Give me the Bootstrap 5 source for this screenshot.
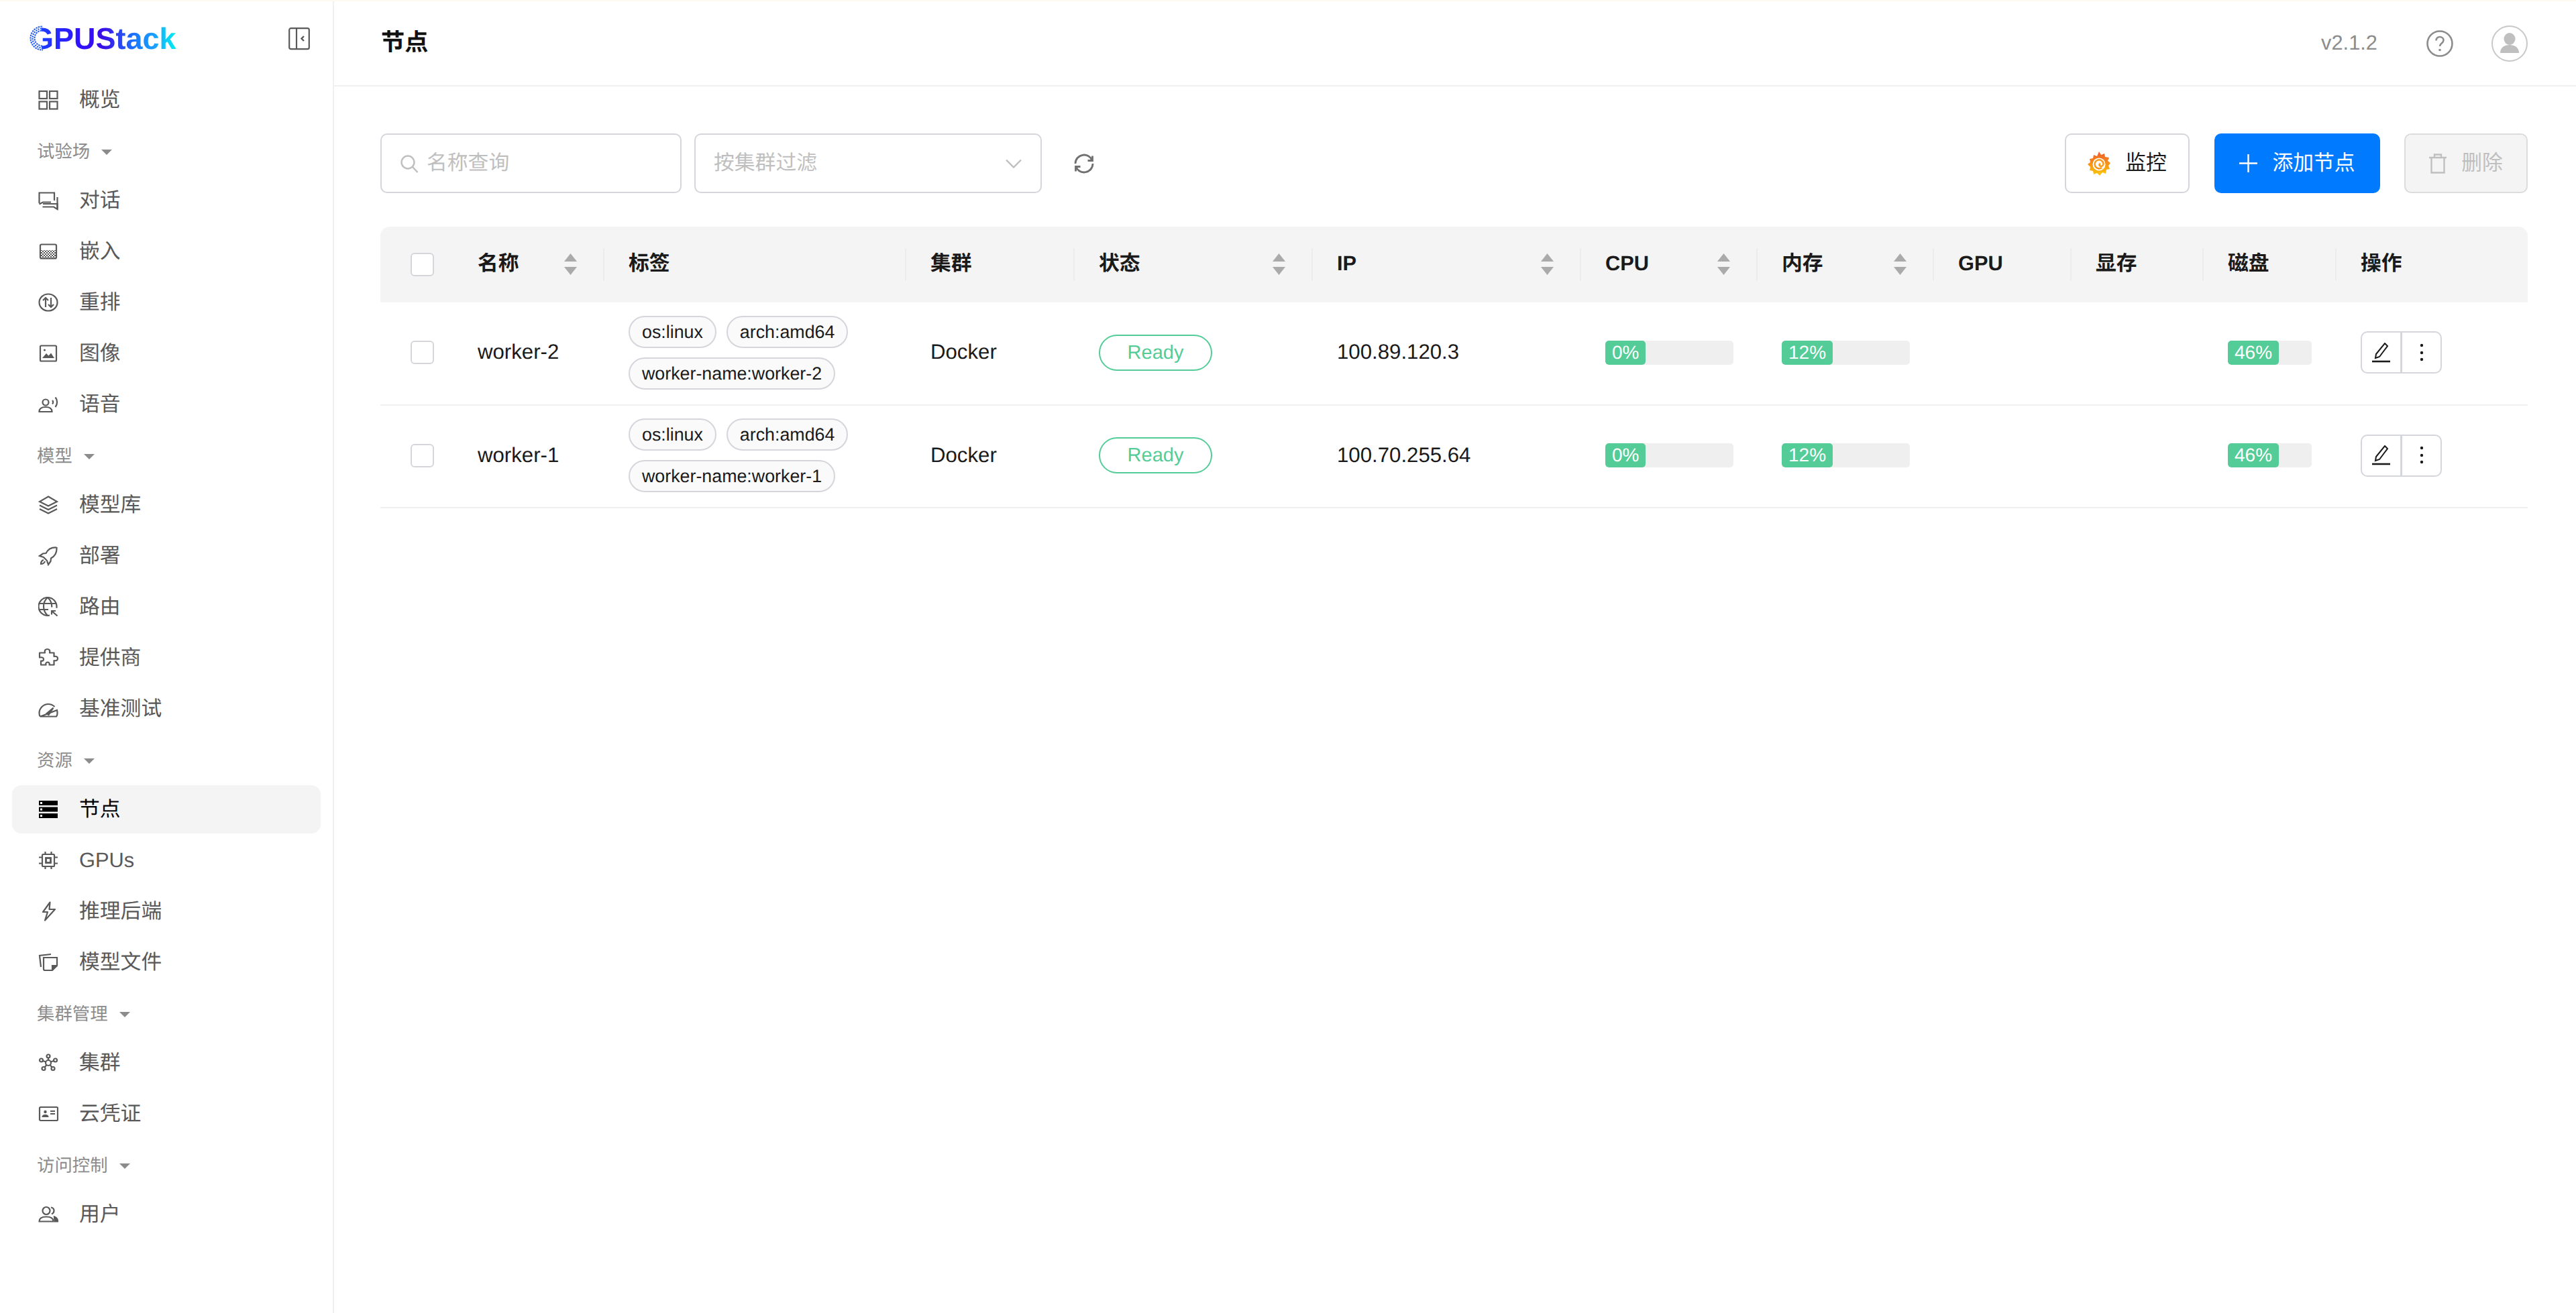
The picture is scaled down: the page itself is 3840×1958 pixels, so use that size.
<!DOCTYPE html>
<html lang="zh-CN">

<head>
    <meta charset="UTF-8">
    <title>GPUStack - 节点</title>
    <link href="https://cdn.jsdelivr.net/npm/bootstrap@5.3.0/dist/css/bootstrap.min.css" rel="stylesheet">
    <style>
        body {
            font-family: "Liberation Sans", "Noto Sans CJK SC", sans-serif;
            font-size: 30.8px;
            color: #1a1a1a;
            background: #fff;
            text-rendering: geometricPrecision;
        }

        .page-wrap {
            min-height: 1956px;
        }

        .top-strip {
            height: 2px;
            background: #fff9f1;
        }

        /* sidebar */
        .side-bar {
            width: 498px;
            flex: 0 0 498px;
            border-right: 2px solid #f0f0f0;
        }

        .side-logo {
            height: 111px;
            padding: 0 34px 0 45px;
        }

        .logo-text {
            position: relative;
            font-size: 45px;
            line-height: 1;
            font-weight: 700;
            background: linear-gradient(90deg, #1a4cff 0%, #2a20ff 25%, #3010ff 35%, #3a10e6 50%, #1a78ff 72%, #1aa0ff 85%, #00f0f0 100%);
            -webkit-background-clip: text;
            background-clip: text;
            color: transparent;
        }

        .logo-dots {
            position: absolute;
            left: -1px;
            top: 3px;
            width: 20px;
            height: 38px;
        }

        .side-item {
            height: 72px;
            margin: 0 18px 4px;
            padding: 0 0 0 39px;
            gap: 31px;
            color: #595959;
            border-radius: 14px;
            font-size: 30.8px;
        }

        .side-item:hover {
            color: #595959;
        }

        .side-item.active-item,
        .side-item.active-item:hover {
            background: #f4f4f4;
            color: #000;
        }

        .side-item svg {
            width: 30px;
            height: 30px;
            flex: none;
            fill: none;
            stroke: currentColor;
            stroke-width: 2.2;
        }

        .side-label {
            height: 74px;
            padding-left: 55px;
            padding-top: 2px;
            gap: 17px;
            color: #8c8c8c;
            font-size: 26.4px;
        }

        .side-caret {
            width: 0;
            height: 0;
            border-left: 8px solid transparent;
            border-right: 8px solid transparent;
            border-top: 8px solid #8c8c8c;
        }

        /* top bar */
        .top-bar {
            height: 127px;
            border-bottom: 2px solid #f0f0f0;
            padding: 0 72px 0 70px;
        }

        .top-title {
            font-size: 35.2px;
            font-weight: 700;
            color: #111;
        }

        .version-text {
            color: #8c8c8c;
            font-size: 30.8px;
            margin-right: 73px;
        }

        .help-icon {
            width: 40px;
            height: 40px;
            margin-right: 57px;
        }

        .user-icon {
            width: 54px;
            height: 54px;
        }

        /* toolbar */
        .main-body {
            padding: 70px 72px 0 69px;
        }

        .tool-row {
            height: 89px;
            margin-bottom: 50px;
        }

        .tool-input {
            height: 89px;
            border: 2px solid #d5d5dc;
            border-radius: 10px;
            color: #bfbfbf;
            background: #fff;
            padding: 0 27px;
        }

        .search-box {
            width: 449px;
            margin-right: 19px;
            gap: 12px;
        }

        .filter-box {
            width: 518px;
            padding-right: 28px;
            margin-right: 47px;
        }

        .refresh-icon {
            width: 32px;
            height: 32px;
        }

        .tool-btn {
            height: 89px;
            border-width: 2px;
            border-radius: 10px;
            font-size: 30.8px;
            padding: 0;
            gap: 22px;
        }

        .btn-monitor {
            width: 186px;
            background: #fff;
            border-color: #d5d5dc;
            color: #1a1a1a;
            margin-right: 37px;
        }

        .btn-add {
            width: 247px;
            background: #007bff;
            border-color: #007bff;
            color: #fff;
            margin-right: 36px;
        }

        .btn-del,
        .btn-del:disabled {
            width: 184px;
            background: #f4f4f4;
            border-color: #dcdcdc;
            color: #bfbfbf;
            opacity: 1;
        }

        /* table */
        .node-table {
            table-layout: fixed;
            width: 3201px;
            margin: 0;
            --bs-table-bg: transparent;
            --bs-table-border-color: #f0f0f0;
            color: #1a1a1a;
        }

        .node-table th {
            height: 113px;
            background: #f4f4f4;
            border: 0;
            padding: 0 39px 2px 38px;
            vertical-align: middle;
            font-weight: 700;
            position: relative;
        }

        .node-table th:first-child {
            padding: 0 0 0 45px;
            border-top-left-radius: 14px;
        }

        .node-table th:last-child {
            border-top-right-radius: 14px;
        }

        .node-table th+th+th::before {
            content: "";
            position: absolute;
            left: 0;
            top: 32px;
            height: 49px;
            width: 2px;
            background: #ececec;
        }

        .node-table td {
            height: 153px;
            padding: 0 0 3px 38px;
            vertical-align: middle;
            border-bottom: 2px solid #f0f0f0;
            font-size: 31.2px;
        }

        .node-table td:first-child {
            padding: 0 0 3px 45px;
        }

        .sort-icon {
            width: 19px;
            height: 32px;
            flex: none;
            fill: #aaa;
        }

        .col-check { width: 107px; }
        .col-name { width: 225px; }
        .col-tags { width: 450px; }
        .col-cluster { width: 251px; }
        .col-state { width: 355px; }
        .col-ip { width: 400px; }
        .col-cpu { width: 263px; }
        .col-mem { width: 263px; }
        .col-gpu { width: 205px; }
        .col-vram { width: 197px; }
        .col-disk { width: 198px; }
        .col-act { width: 287px; }

        .row-check.form-check-input {
            width: 35px;
            height: 35px;
            margin: 0;
            border: 2px solid #d5d5dc;
            border-radius: 6px;
            display: block;
        }

        .tag-list {
            gap: 14px 15px;
        }

        .tag-pill {
            height: 48px;
            line-height: 44px;
            padding: 0 18px;
            border: 2px solid #d5d5dc;
            border-radius: 24px;
            background: #fafafa;
            font-size: 26.8px;
            color: #1a1a1a;
            white-space: nowrap;
        }

        .state-pill {
            width: 169px;
            height: 54px;
            line-height: 50px;
            text-align: center;
            border: 2px solid #54cc98;
            border-radius: 27px;
            color: #54cc98;
            font-size: 29px;
            background: #fff;
        }

        .usage-bar.progress {
            height: 36px;
            border-radius: 5px;
            background: #efefef;
            width: 191px;
            font-size: 28px;
        }

        .usage-bar.disk-bar {
            width: 125px;
        }

        .usage-bar .progress-bar {
            background: #54cc98;
            color: #fff;
            min-width: fit-content;
            padding: 0 10px;
            border-radius: 5px;
            overflow: visible;
        }

        .act-group .btn {
            width: 61px;
            height: 63px;
            padding: 0;
            background: #fff;
            border: 2px solid #d5d5dc;
            border-radius: 10px;
        }

        .act-group .btn svg {
            width: 30px;
            height: 30px;
        }
    </style>
</head>

<body>
    <div class="top-strip"></div>
    <div class="d-flex page-wrap">
        <!-- sidebar -->
        <aside class="side-bar">
            <div class="side-logo d-flex align-items-center justify-content-between">
                <span class="logo-text">GPUStack
                    <svg class="logo-dots" viewBox="0 0 20 38">
                        <rect width="18" height="38" fill="#fff"/>
                        <g fill="none" stroke="#1c57f2">
                            <circle cx="19" cy="19" r="17.500" stroke-width="2" stroke-dasharray="2.400 1.200"/>
                            <circle cx="19" cy="19" r="14.500" stroke-width="2.200" stroke-dasharray="2 1.600"/>
                            <circle cx="19" cy="19" r="11.500" stroke-width="2" stroke-dasharray="2.400 1.200"/>
                        </g>
                    </svg>
                </span>
                <svg width="32" height="34" viewBox="0 0 32 34" fill="none" stroke="#595959" stroke-width="2.2">
                    <rect x="1.2" y="1.2" width="29.6" height="31" rx="2.5"/>
                    <path d="M12 1.2v31"/>
                    <path d="M23 13l-3.5 3.5L23 20" stroke-width="2.4"/>
                </svg>
            </div>

            <nav class="nav flex-column">
                <a class="nav-link side-item d-flex align-items-center" href="#">
                    <svg viewBox="0 0 30 30"><rect x="1.5" y="2" width="11.5" height="11"/><rect x="17" y="2" width="11.5" height="11"/><rect x="1.5" y="17.5" width="11.5" height="11"/><rect x="17" y="17.5" width="11.5" height="11"/></svg>
                    <span>概览</span>
                </a>
                <div class="side-label d-flex align-items-center"><span>试验场</span><i class="side-caret"></i></div>
                <a class="nav-link side-item d-flex align-items-center" href="#">
                    <svg viewBox="0 0 30 30"><path d="M1.5 19V3.5H24V15"/><path d="M1.5 20.5L7 17.5H19"/><path d="M7 20H28.5V28L23 24.5H6.5"/><path d="M28.5 10V28"/></svg>
                    <span>对话</span>
                </a>
                <a class="nav-link side-item d-flex align-items-center" href="#">
                    <svg viewBox="0 0 30 30"><defs><pattern id="chk" width="4" height="4" patternUnits="userSpaceOnUse"><rect width="2" height="2" fill="#595959" stroke="none"/><rect x="2" y="2" width="2" height="2" fill="#595959" stroke="none"/></pattern></defs><rect x="3" y="4.5" width="24" height="21" rx="2"/><rect x="3" y="13" width="24" height="12" fill="url(#chk)" stroke="none"/></svg>
                    <span>嵌入</span>
                </a>
                <a class="nav-link side-item d-flex align-items-center" href="#">
                    <svg viewBox="0 0 30 30"><ellipse cx="15" cy="15" rx="13.5" ry="12.5"/><path d="M11 22V9M7 12l4-4 4 4M19 8v13M15 18l4 4 4-4"/></svg>
                    <span>重排</span>
                </a>
                <a class="nav-link side-item d-flex align-items-center" href="#">
                    <svg viewBox="0 0 30 30"><rect x="3" y="3.5" width="24" height="23" rx="1.5"/><circle cx="9.5" cy="10" r="1.6" fill="currentColor" stroke="none"/><path d="M6 22l6-7 3.5 3.5 3.5-4 5 7.5z" fill="currentColor" stroke="none"/></svg>
                    <span>图像</span>
                </a>
                <a class="nav-link side-item d-flex align-items-center" href="#">
                    <svg viewBox="0 0 30 30"><circle cx="11" cy="12" r="4.5"/><path d="M1.5 26c0-5 4-7 9.5-7s9.5 2 9.5 7z"/><path d="M21 9c1.500 1.500 1.500 4 0 5.500M25.500 4.500c3.500 4 3.500 10 0 14.500"/></svg>
                    <span>语音</span>
                </a>
                <div class="side-label d-flex align-items-center"><span>模型</span><i class="side-caret"></i></div>
                <a class="nav-link side-item d-flex align-items-center" href="#">
                    <svg viewBox="0 0 30 30"><path d="M15 2.500L28 10l-13 6.500L2 10z"/><path d="M2 15.500l13 6.500 13-6.500"/><path d="M2 21l13 6.500L28 21"/></svg>
                    <span>模型库</span>
                </a>
                <a class="nav-link side-item d-flex align-items-center" href="#">
                    <svg viewBox="0 0 30 30"><path d="M27.500 2.500c-7-.5-13 2.500-16 8.500L7 11.500 2 15l6 2 5 5 2 6 3.500-5 .5-4.500c6-3 9-9 8.500-16.500z"/><path d="M8 21c-3 1-4 4-4 6 2 0 5-1 6-4"/></svg>
                    <span>部署</span>
                </a>
                <a class="nav-link side-item d-flex align-items-center" href="#">
                    <svg viewBox="0 0 30 30"><path d="M17 27.500c-1 .3-2 .5-3 .5A13.500 13.500 0 1 1 27.500 14.500c0 .8 0 1.500-.2 2.200"/><path d="M14 1c-8 7-8 19 0 27M14 1c4.500 4 6.500 9 6.300 14.500M1.500 10h25M1.500 19H15"/><path d="M28.500 28.500L20 21M20 26.500V21h6"/></svg>
                    <span>路由</span>
                </a>
                <a class="nav-link side-item d-flex align-items-center" href="#">
                    <svg viewBox="0 0 30 30"><path d="M10 7.500c-1-4 1-5.500 3.500-5.500s4.500 1.500 3.500 5.500h6.500v5.500c4-1 5.500 1 5.500 3s-1.500 4-5.500 3v6.500h-7c.8-3-1-4-2.500-4s-3.300 1-2.500 4H4v-6c3 .8 4-1 4-2.500S7 13.500 2 14.500V7.500z" stroke-linejoin="round"/></svg>
                    <span>提供商</span>
                </a>
                <a class="nav-link side-item d-flex align-items-center" href="#">
                    <svg viewBox="0 0 30 30"><path d="M3 26.500c-1-1-1.500-3-1.500-5 0-7.500 6-13.500 13.500-13.500 4 0 7 1.500 9.500 4M28 17c.5 1.500.5 3 .5 4.500 0 2-.5 4-1.500 5H3z"/><path d="M12.500 22l10-8.500-7 10.500z" fill="currentColor"/></svg>
                    <span>基准测试</span>
                </a>
                <div class="side-label d-flex align-items-center"><span>资源</span><i class="side-caret"></i></div>
                <a class="nav-link side-item active-item d-flex align-items-center" href="#">
                    <svg viewBox="0 0 30 30"><rect x="1" y="2" width="28" height="7" fill="#000" stroke="none"/><rect x="1" y="11.500" width="28" height="7" fill="#000" stroke="none"/><rect x="1" y="21" width="28" height="7" fill="#000" stroke="none"/><rect x="3" y="4" width="3" height="3" fill="#fff" stroke="none"/><rect x="3" y="13.500" width="3" height="3" fill="#fff" stroke="none"/><rect x="3" y="23" width="3" height="3" fill="#fff" stroke="none"/></svg>
                    <span>节点</span>
                </a>
                <a class="nav-link side-item d-flex align-items-center" href="#">
                    <svg viewBox="0 0 30 30"><rect x="6" y="6" width="18" height="18" rx="1.500"/><rect x="11.500" y="11.500" width="7" height="7" stroke-width="2.800"/><path d="M10.500 2v4M19.500 2v4M10.500 24v4M19.500 24v4M1 10.500h5M1 19.500h5M24 10.500h5M24 19.500h5"/></svg>
                    <span>GPUs</span>
                </a>
                <a class="nav-link side-item d-flex align-items-center" href="#">
                    <svg viewBox="0 0 30 30"><path d="M18.500 1.500L8 16h7l-4 12.500L26 12h-8.500z" stroke-linejoin="round" transform="translate(-1 0)"/></svg>
                    <span>推理后端</span>
                </a>
                <a class="nav-link side-item d-flex align-items-center" href="#">
                    <svg viewBox="0 0 30 30"><path d="M19 3L2 5l2 17"/><path d="M8 8h20v12l-7 7H10a2 2 0 0 1-2-2z"/><path d="M21 27v-7h7" fill="currentColor"/></svg>
                    <span>模型文件</span>
                </a>
                <div class="side-label d-flex align-items-center"><span>集群管理</span><i class="side-caret"></i></div>
                <a class="nav-link side-item d-flex align-items-center" href="#">
                    <svg viewBox="0 0 30 30"><circle cx="15" cy="15" r="4"/><circle cx="15" cy="5" r="2.500"/><circle cx="4.500" cy="11" r="2.500"/><circle cx="25.500" cy="11" r="2.500"/><circle cx="8" cy="23.500" r="2.500"/><circle cx="22" cy="23.500" r="2.500"/><path d="M15 7.500V11M7 12l4.500 1.500M23 12l-4.500 1.500M9.500 21.500l3-3.500M20.500 21.500l-3-3.500"/></svg>
                    <span>集群</span>
                </a>
                <a class="nav-link side-item d-flex align-items-center" href="#">
                    <svg viewBox="0 0 30 30"><rect x="2" y="5" width="27" height="20" rx="1.500"/><circle cx="10.500" cy="12" r="2.200" fill="currentColor" stroke="none"/><path d="M5.500 20c0-3 2-4 5-4s5 1 5 4z" fill="currentColor" stroke="none"/><path d="M18 11h7M18 15h7"/></svg>
                    <span>云凭证</span>
                </a>
                <div class="side-label d-flex align-items-center"><span>访问控制</span><i class="side-caret"></i></div>
                <a class="nav-link side-item d-flex align-items-center" href="#">
                    <svg viewBox="0 0 30 30"><circle cx="12" cy="9.500" r="5.500"/><path d="M1.500 25.500c0-5 4.500-7 10.500-7s10.500 2 10.500 7z"/><path d="M19 4.500c3 .5 4.500 2.500 4.500 5s-1.500 4-3.500 5"/><path d="M24 18.500c3 1 5 3.500 5 7h-4.500z" fill="currentColor"/></svg>
                    <span>用户</span>
                </a>
            </nav>
        </aside>

        <!-- main -->
        <div class="flex-grow-1">
            <header class="top-bar d-flex align-items-center">
                <div class="top-title me-auto">节点</div>
                <span class="version-text">v2.1.2</span>
                <svg class="help-icon" viewBox="0 0 40 40" fill="none" stroke="#8c8c8c" stroke-width="2.600">
                    <circle cx="20" cy="20" r="18.500"/>
                    <path d="M14.500 15.500c0-3.500 2.500-5.500 5.500-5.500s5.500 2 5.500 5c0 4.500-5.500 4.500-5.500 9"/>
                    <circle cx="20" cy="29.500" r="1.800" fill="#8c8c8c" stroke="none"/>
                </svg>
                <svg class="user-icon" viewBox="0 0 54 54">
                    <circle cx="27" cy="27" r="26" fill="none" stroke="#c8c8c8" stroke-width="2"/>
                    <ellipse cx="27" cy="20" rx="8.500" ry="9" fill="#bfbfbf"/>
                    <path d="M13 41c0-8 6-12 14-12s14 4 14 12z" fill="#bfbfbf"/>
                </svg>
            </header>

            <div class="main-body">
                <div class="tool-row d-flex align-items-center">
                    <div class="tool-input search-box d-flex align-items-center">
                        <svg width="28" height="28" viewBox="0 0 28 28" fill="none" stroke="#bfbfbf" stroke-width="2.400"><circle cx="12" cy="12" r="9.500"/><path d="M19 19l7.500 8"/></svg>
                        <span>名称查询</span>
                    </div>
                    <div class="tool-input filter-box d-flex align-items-center justify-content-between">
                        <span>按集群过滤</span>
                        <svg width="24" height="14" viewBox="0 0 24 14" fill="none" stroke="#bfbfbf" stroke-width="2.400"><path d="M1 1.500l11 11 11-11"/></svg>
                    </div>
                    <svg class="refresh-icon me-auto" viewBox="0 0 32 32" fill="none" stroke="#707070" stroke-width="2.800">
                        <path d="M3 16A13 13 0 0 1 28 11"/>
                        <path d="M29 16A13 13 0 0 1 4 21"/>
                        <path d="M28.500 4.500V11.500H21.500M3.500 27.500V20.500H10.500"/>
                    </svg>
                    <button class="btn tool-btn btn-monitor d-flex align-items-center justify-content-center">
                        <svg width="34" height="36" viewBox="0 0 34 36">
                            <defs><linearGradient id="graf" x1="0" y1="0" x2="0" y2="1"><stop offset="0" stop-color="#f05a28"/><stop offset="1" stop-color="#fbca0a"/></linearGradient></defs>
                            <path d="M17 0l3 5 5-2 1 5 6 1-2 5 4 3-3 4 2 5-5 1-1 6-5-2-4 5-4-4-5 2-1-5-5-1 1-5-4-4 4-3-1-5 5-1 1-5 5 2z" fill="url(#graf)"/>
                            <circle cx="17" cy="19" r="9.500" fill="#fff"/>
                            <path d="M21 24a6.500 6.500 0 1 1 2.500-6c.3 3-2.500 4.500-5 3.500-1.500-.8-1.500-3 .5-3.500" fill="none" stroke="#f79a1c" stroke-width="2.600"/>
                        </svg>
                        <span>监控</span>
                    </button>
                    <button class="btn tool-btn btn-add d-flex align-items-center justify-content-center">
                        <svg width="27" height="27" viewBox="0 0 27 27" fill="none" stroke="#fff" stroke-width="2.400"><path d="M13.500 0v27M0 13.500h27"/></svg>
                        <span>添加节点</span>
                    </button>
                    <button class="btn tool-btn btn-del d-flex align-items-center justify-content-center" disabled>
                        <svg width="26" height="30" viewBox="0 0 26 30" fill="none" stroke="#bfbfbf" stroke-width="2.400"><path d="M0 6h26M8 6V1.500h10V6M3.500 6v22.500h19V6"/></svg>
                        <span>删除</span>
                    </button>
                </div>

                <table class="table node-table">
                    <colgroup>
                        <col class="col-check"><col class="col-name"><col class="col-tags"><col class="col-cluster">
                        <col class="col-state"><col class="col-ip"><col class="col-cpu"><col class="col-mem">
                        <col class="col-gpu"><col class="col-vram"><col class="col-disk"><col class="col-act">
                    </colgroup>
                    <thead>
                        <tr id="head-row"></tr>
                    </thead>
                    <tbody id="node-list"></tbody>
                </table>
            </div>
        </div>
    </div>

    <script src="https://cdn.jsdelivr.net/npm/bootstrap@5.3.0/dist/js/bootstrap.bundle.min.js"></script>
    <script>
        const columns = [
            { title: "名称", sort: true },
            { title: "标签" },
            { title: "集群" },
            { title: "状态", sort: true },
            { title: "IP", sort: true },
            { title: "CPU", sort: true },
            { title: "内存", sort: true },
            { title: "GPU" },
            { title: "显存" },
            { title: "磁盘" },
            { title: "操作" }
        ];

        const nodes = [
            { name: "worker-2", cluster: "Docker", state: "Ready", ip: "100.89.120.3", cpu: 0, mem: 12, disk: 46 },
            { name: "worker-1", cluster: "Docker", state: "Ready", ip: "100.70.255.64", cpu: 0, mem: 12, disk: 46 }
        ];

        const sortIcon = `<svg class="sort-icon" viewBox="0 0 19 32"><path d="M9.500 0L19 12H0z"/><path d="M0 20h19L9.500 32z"/></svg>`;

        function usageBar(value, extra) {
            return `
        <div class="progress usage-bar ${extra || ""}">
          <div class="progress-bar" style="width: ${value}%">${value}%</div>
        </div>`;
        }

        function renderHead() {
            let html = `<th><input class="form-check-input row-check" type="checkbox"></th>`;
            columns.forEach(c => {
                html += `<th><div class="d-flex align-items-center justify-content-between"><span>${c.title}</span>${c.sort ? sortIcon : ""}</div></th>`;
            });
            document.getElementById("head-row").innerHTML = html;
        }

        function renderNodes() {
            const list = document.getElementById("node-list");
            list.innerHTML = "";
            nodes.forEach(n => {
                list.innerHTML += `
        <tr>
          <td><input class="form-check-input row-check" type="checkbox"></td>
          <td>${n.name}</td>
          <td>
            <div class="d-flex flex-wrap tag-list">
              <span class="tag-pill">os:linux</span>
              <span class="tag-pill">arch:amd64</span>
              <span class="tag-pill">worker-name:${n.name}</span>
            </div>
          </td>
          <td>${n.cluster}</td>
          <td><div class="state-pill">${n.state}</div></td>
          <td>${n.ip}</td>
          <td>${usageBar(n.cpu)}</td>
          <td>${usageBar(n.mem)}</td>
          <td></td>
          <td></td>
          <td>${usageBar(n.disk, "disk-bar")}</td>
          <td>
            <div class="btn-group act-group">
              <button class="btn" type="button">
                <svg viewBox="0 0 30 30" fill="none" stroke="#1a1a1a" stroke-width="2"><path d="M22 2l4 4-12 16-6 2 1-6z" transform="translate(-2 -1)"/><path d="M1 28h27" stroke-width="2.600"/></svg>
              </button>
              <button class="btn" type="button">
                <svg viewBox="0 0 30 30" fill="#1a1a1a"><circle cx="15" cy="4" r="2.200"/><circle cx="15" cy="15" r="2.200"/><circle cx="15" cy="25" r="2.200"/></svg>
              </button>
            </div>
          </td>
        </tr>`;
            });
        }

        renderHead();
        renderNodes();
    </script>
</body>

</html>
